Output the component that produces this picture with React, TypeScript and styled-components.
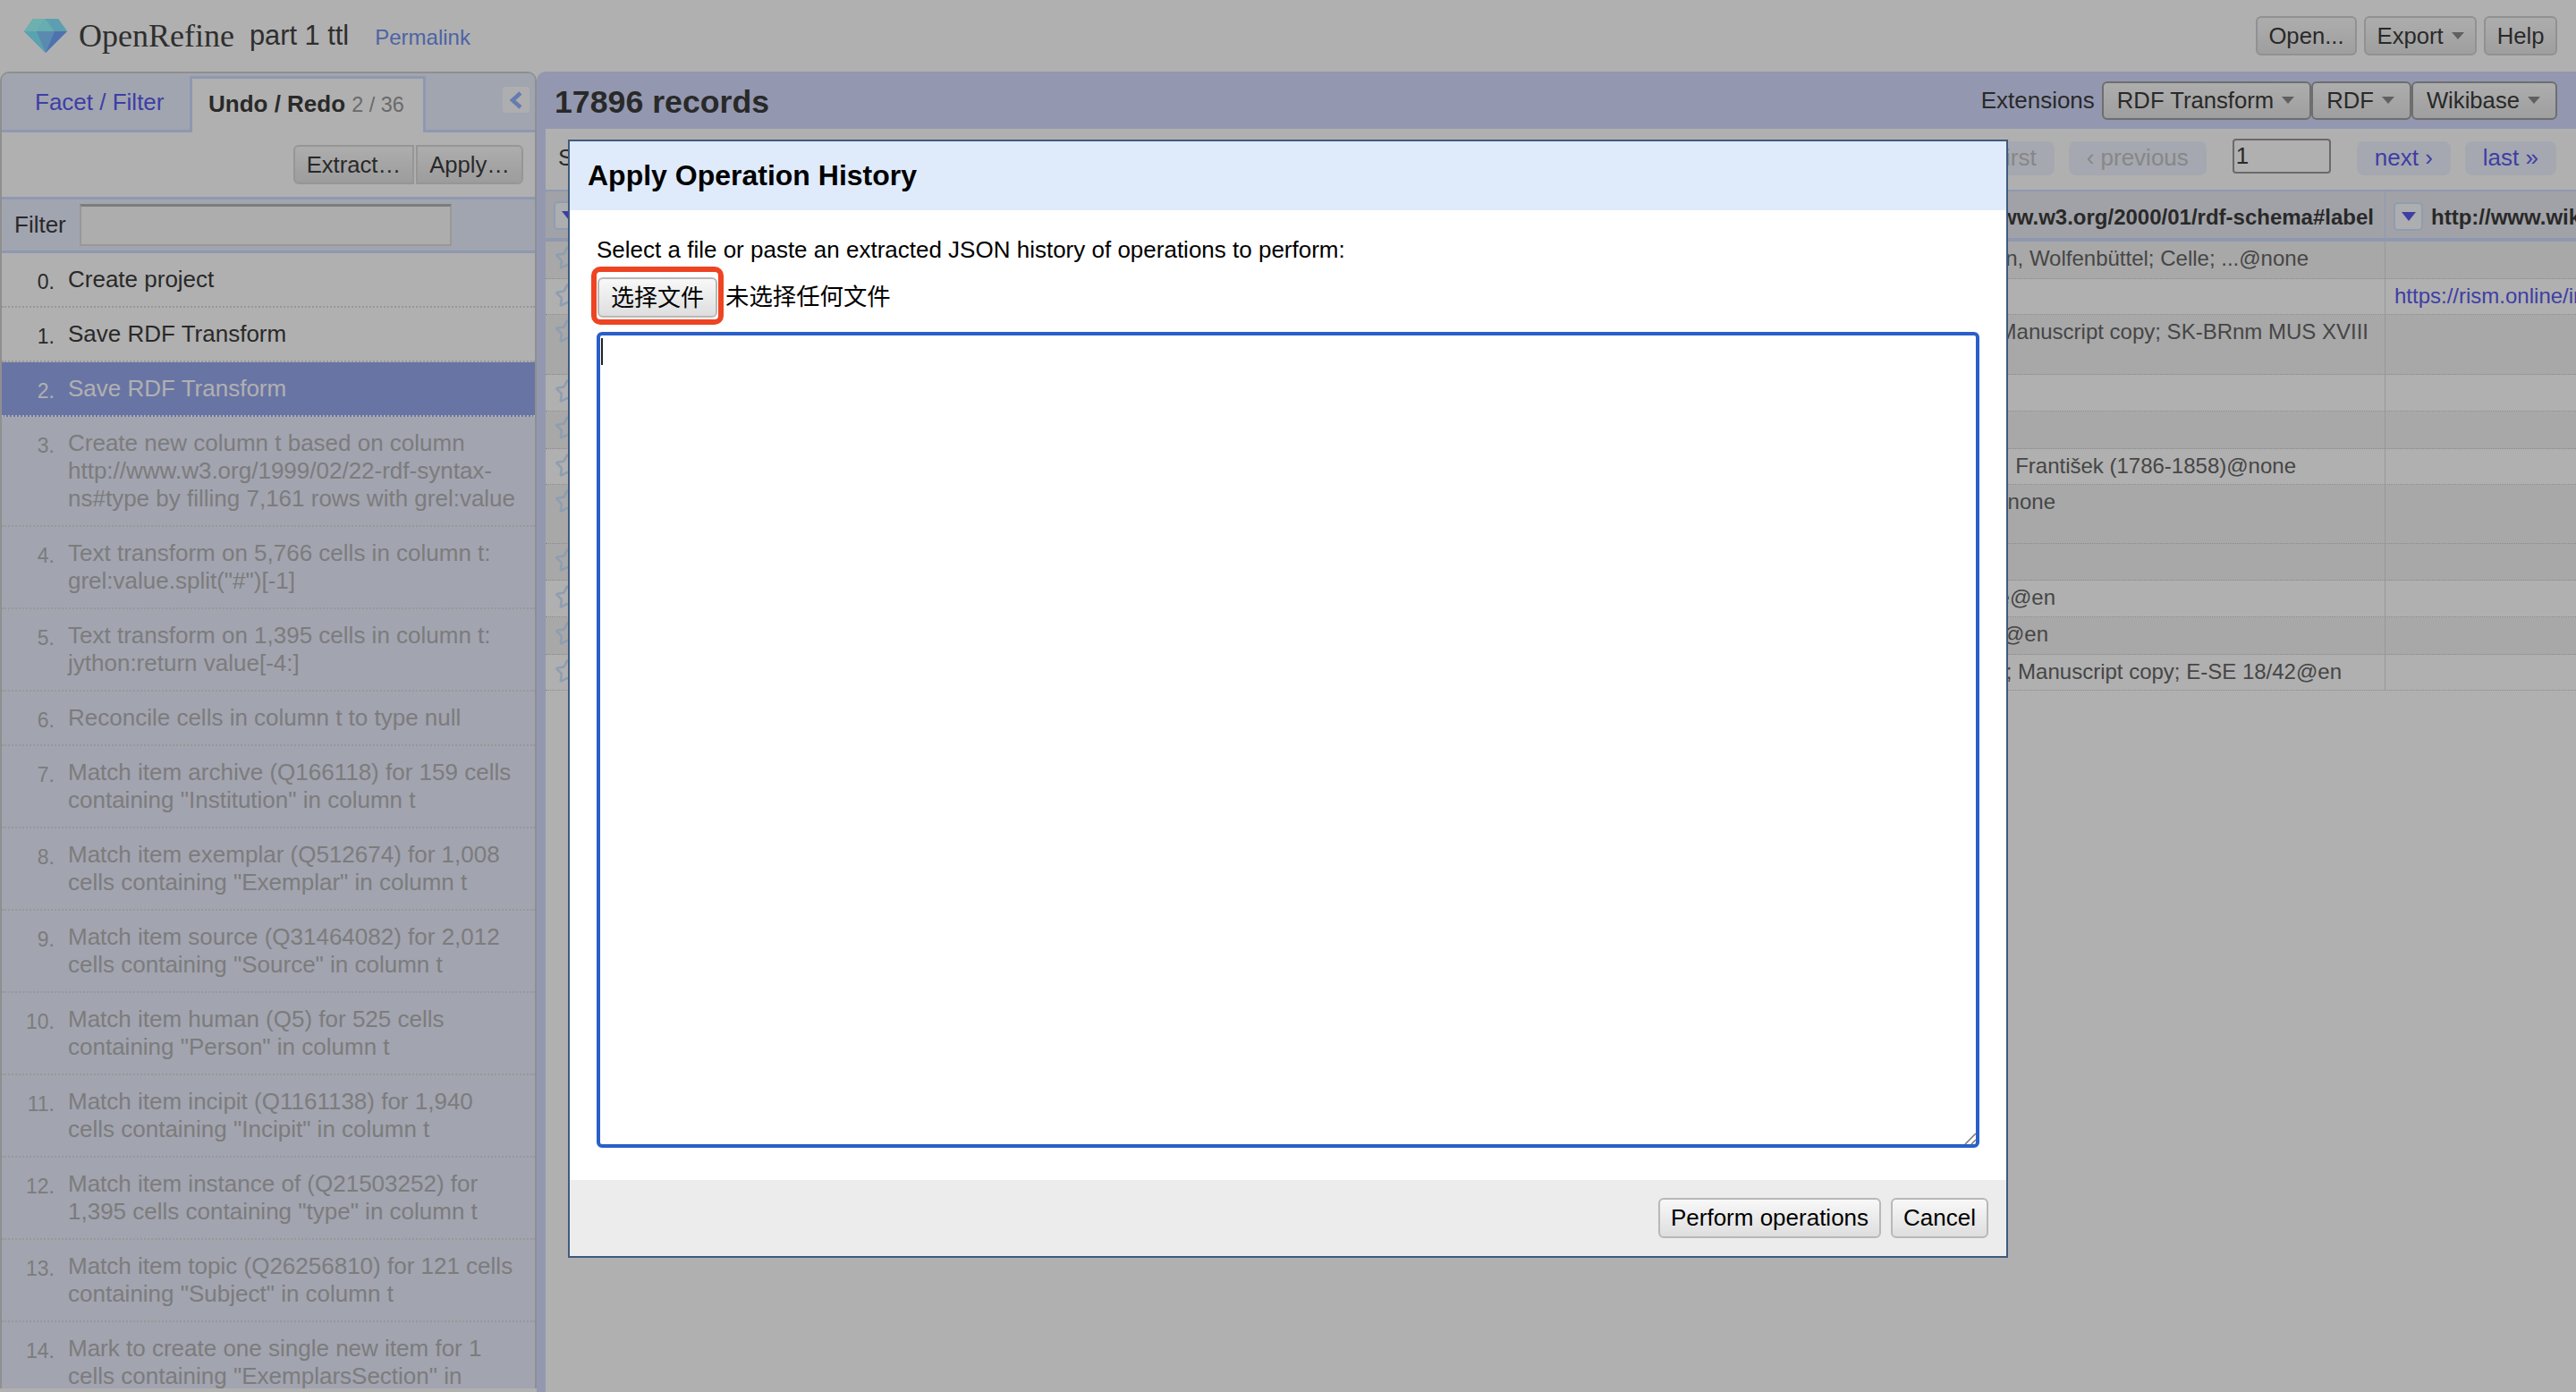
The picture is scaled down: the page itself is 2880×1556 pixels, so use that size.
import styled, { createGlobalStyle } from "styled-components";
import { Star } from "lucide-react";

const GlobalStyle = createGlobalStyle`
  html, body {
    margin: 0;
    height: 100%;
    overflow: hidden;
    background: #fff;
    font-family: "Liberation Sans", Arial, sans-serif;
    font-size: 26px;
    color: #3c3c3c;
  }
  * { box-sizing: border-box; }
`;

const history = [
  "Create project",
  "Save RDF Transform",
  "Save RDF Transform",
  "Create new column t based on column http://www.w3.org/1999/02/22-rdf-syntax-ns#type by filling 7,161 rows with grel:value",
  'Text transform on 5,766 cells in column t: grel:value.split("#")[-1]',
  "Text transform on 1,395 cells in column t: jython:return value[-4:]",
  "Reconcile cells in column t to type null",
  'Match item archive (Q166118) for 159 cells containing "Institution" in column t',
  'Match item exemplar (Q512674) for 1,008 cells containing "Exemplar" in column t',
  'Match item source (Q31464082) for 2,012 cells containing "Source" in column t',
  'Match item human (Q5) for 525 cells containing "Person" in column t',
  'Match item incipit (Q1161138) for 1,940 cells containing "Incipit" in column t',
  'Match item instance of (Q21503252) for 1,395 cells containing "type" in column t',
  'Match item topic (Q26256810) for 121 cells containing "Subject" in column t',
  'Mark to create one single new item for 1 cells containing "ExemplarsSection" in column t',
];

const CURRENT = 2;

const rows = [
  { h: 42, dark: true, end: 85, text: "Niedersachsen, Wolfenbüttel; Celle; ...@none" },
  { h: 40, dark: false, end: 0, text: "", link: "https://rism.online/incipits/1000" },
  { h: 67, dark: true, end: 18, text: "Manuscript copy; SK-BRnm MUS XVIII" },
  { h: 41, dark: false, end: 0, text: "" },
  { h: 42, dark: true, end: 0, text: "" },
  { h: 40, dark: false, end: 99, text: "František (1786-1858)@none" },
  { h: 66, dark: true, end: 368, text: "@none" },
  { h: 41, dark: true, end: 0, text: "" },
  { h: 41, dark: false, end: 368, text: "e@en" },
  { h: 42, dark: true, end: 376, text: "@en" },
  { h: 40, dark: false, end: 48, text: "; Manuscript copy; E-SE 18/42@en" },
];

function Logo() {
  return (
    <svg width="48" height="38" viewBox="0 0 48 38">
      <polygon points="10,0 38,0 48,14 24,38 0,14" fill="#84d5ff" />
      <polygon points="10,0 24,0 14,14 0,14" fill="#9effff" />
      <polygon points="24,0 14,14 34,14" fill="#94fcff" />
      <polygon points="24,0 38,0 48,14 34,14" fill="#87e6ff" />
      <polygon points="0,14 14,14 24,38" fill="#82ecff" />
      <polygon points="14,14 34,14 24,38" fill="#84c9ff" />
      <polygon points="34,14 48,14 24,38" fill="#72a5ff" />
    </svg>
  );
}

function Chevron() {
  return (
    <svg width="16" height="20" viewBox="0 0 16 20">
      <path d="M13 2 L4 10 L13 18" fill="none" stroke="#8aaeff" strokeWidth="4.5" />
    </svg>
  );
}

function ResizeGrip() {
  return (
    <svg width="14" height="14" viewBox="0 0 14 14">
      <path d="M1 13 L13 1 M8 13 L13 8" stroke="#777" strokeWidth="1.5" fill="none" />
    </svg>
  );
}

export default function App() {
  return (
    <Page>
      <GlobalStyle />
      <Header>
        <Logo />
        <Brand>OpenRefine</Brand>
        <ProjectName>part 1 ttl</ProjectName>
        <Permalink>Permalink</Permalink>
        <HeaderActions>
          <HeaderButton>Open...</HeaderButton>
          <HeaderButton>
            Export <Caret />
          </HeaderButton>
          <HeaderButton>Help</HeaderButton>
        </HeaderActions>
      </Header>

      <Body>
        <LeftPanel>
          <TabBar>
            <Tab>Facet / Filter</Tab>
            <ActiveTab>
              <strong>Undo / Redo</strong> <TabCount>2 / 36</TabCount>
            </ActiveTab>
            <CollapseButton>
              <Chevron />
            </CollapseButton>
          </TabBar>
          <ActionRow>
            <GroupButton $side="left">Extract…</GroupButton>
            <GroupButton $side="right">Apply…</GroupButton>
          </ActionRow>
          <FilterRow>
            <span>Filter</span>
            <FilterInput />
          </FilterRow>
          {history.map((text, i) => (
            <HistoryRow key={i} $state={i < CURRENT ? "done" : i === CURRENT ? "current" : "future"}>
              <HistoryIndex>{i}.</HistoryIndex>
              <div>{text}</div>
            </HistoryRow>
          ))}
        </LeftPanel>

        <RightPanel>
          <SummaryBar>
            <RecordCount>17896 records</RecordCount>
            <Extensions>
              <span>Extensions</span>
              <ExtensionButtons>
                <ExtensionButton>
                  RDF Transform <Caret />
                </ExtensionButton>
                <ExtensionButton>
                  RDF <Caret />
                </ExtensionButton>
                <ExtensionButton>
                  Wikibase <Caret />
                </ExtensionButton>
              </ExtensionButtons>
            </Extensions>
          </SummaryBar>

          <Content>
            <Pager>
              <span>Show as: rows records</span>
              <PagerControls>
                <PageLink $disabled>« first</PageLink>
                <PageLink $disabled>‹ previous</PageLink>
                <PageInput defaultValue="1" />
                <PageLink>next ›</PageLink>
                <PageLink>last »</PageLink>
              </PagerControls>
            </Pager>

            <TableHead>
              <HeadStarCell>
                <ColumnMenu>
                  <MenuArrow />
                </ColumnMenu>
              </HeadStarCell>
              <HeadLabel>http://www.w3.org/2000/01/rdf-schema#label</HeadLabel>
              <HeadLast>
                <ColumnMenu>
                  <MenuArrow />
                </ColumnMenu>
                <HeadLastText>http://www.wikidata.org/prop</HeadLastText>
              </HeadLast>
            </TableHead>

            {rows.map((row, i) => (
              <TableRow key={i} $dark={row.dark} $height={row.h}>
                <StarCell>
                  <Star size={29} strokeWidth={2.1} color="#cfe4ff" />
                </StarCell>
                <LabelCell $end={row.end}>{row.text}</LabelCell>
                <LastCell>{row.link && <CellLink>{row.link}</CellLink>}</LastCell>
              </TableRow>
            ))}
          </Content>
        </RightPanel>
      </Body>

      <Overlay />

      <Dialog>
        <DialogTitle>Apply Operation History</DialogTitle>
        <DialogBody>
          <div>Select a file or paste an extracted JSON history of operations to perform:</div>
          <FileRow>
            <Highlight>
              <FileButton>选择文件</FileButton>
            </Highlight>
            <FileLabel>未选择任何文件</FileLabel>
          </FileRow>
          <TextareaWrap>
            <HistoryInput />
            <TextCaret />
            <GripSlot>
              <ResizeGrip />
            </GripSlot>
          </TextareaWrap>
        </DialogBody>
        <DialogFooter>
          <DialogButton>Perform operations</DialogButton>
          <DialogButton>Cancel</DialogButton>
        </DialogFooter>
      </Dialog>
    </Page>
  );
}

const Page = styled.div`
  display: flex;
  flex-direction: column;
  width: 2880px;
  height: 1556px;
  overflow: hidden;
`;

const Header = styled.header`
  display: flex;
  align-items: center;
  flex: 0 0 80px;
  padding: 0 21px 0 27px;
`;

const Brand = styled.span`
  margin-left: 13px;
  font-family: "Liberation Serif", "Times New Roman", serif;
  font-size: 36px;
  color: #444;
`;

const ProjectName = styled.span`
  margin-left: 17px;
  font-size: 30.8px;
  color: #444;
`;

const Permalink = styled.a`
  margin-left: 29px;
  margin-top: 4px;
  font-size: 24px;
  color: #6f92ee;
`;

const HeaderActions = styled.div`
  display: flex;
  gap: 8px;
  margin-left: auto;
`;

const HeaderButton = styled.button`
  display: flex;
  align-items: center;
  gap: 9px;
  height: 44px;
  padding: 0 12.5px;
  font: inherit;
  font-size: 25.67px;
  color: #3c3c3c;
  background: linear-gradient(#fbfbfb, #e6e6e6);
  border: 2px solid #d2d2d2;
  border-radius: 6px;
`;

const Caret = styled.i`
  display: inline-block;
  border-left: 7px solid transparent;
  border-right: 7px solid transparent;
  border-top: 8px solid #8c8c8c;
`;

const Body = styled.div`
  display: flex;
  flex: 1;
  min-height: 0;
`;

const LeftPanel = styled.aside`
  flex: 0 0 600px;
  margin-bottom: 4px;
  overflow: hidden;
  border: 2px solid #cfcfcf;
  border-bottom: 0;
  border-radius: 10px 10px 0 0;
`;

const TabBar = styled.div`
  display: flex;
  height: 66px;
  background: #e9efff;
  border-bottom: 3px solid #cfdcff;
`;

const Tab = styled.div`
  width: 210px;
  padding: 17px 0 0 37px;
  color: #5b5bef;
`;

const ActiveTab = styled.div`
  width: 264px;
  margin: 3px 0 -3px;
  padding: 13px 0 0 18px;
  white-space: nowrap;
  background: #fff;
  border: 3px solid #cfdcff;
  border-bottom: 0;
`;

const TabCount = styled.span`
  font-size: 23.4px;
  color: #9a9a9a;
`;

const CollapseButton = styled.div`
  display: flex;
  align-items: center;
  justify-content: center;
  width: 30px;
  height: 29px;
  margin: 15px 6px 0 auto;
  background: #fff;
  border-radius: 4px;
  opacity: 0.9;
`;

const ActionRow = styled.div`
  display: flex;
  justify-content: flex-end;
  align-items: center;
  gap: 2px;
  height: 72px;
  padding-right: 13px;
`;

const GroupButton = styled.button<{ $side: "left" | "right" }>`
  height: 44px;
  padding: 0 13px;
  font: inherit;
  font-size: 25.67px;
  color: #3c3c3c;
  background: linear-gradient(#fbfbfb, #e3e3e3);
  border: 2px solid #dadada;
  border-radius: ${(p) => (p.$side === "left" ? "6px 0 0 6px" : "0 6px 6px 0")};
`;

const FilterRow = styled.div`
  display: flex;
  align-items: center;
  gap: 15px;
  height: 63px;
  padding-left: 14px;
  background: #e9efff;
  border-top: 3px solid #cfdcff;
  border-bottom: 3px solid #cfdcff;
`;

const FilterInput = styled.input`
  width: 416px;
  height: 47px;
  background: #fbfbfb;
  border: 2px solid #dcdcdc;
  border-top: 3px solid #b4b4b4;
`;

const HistoryRow = styled.div<{ $state: "done" | "current" | "future" }>`
  display: grid;
  grid-template-columns: 59px 1fr;
  column-gap: 15px;
  padding: 14px 13px 14px 0;
  line-height: 31px;
  border-bottom: 2px dotted ${(p) => (p.$state === "current" ? "#fff" : "#dcdcdc")};
  background: ${(p) => (p.$state === "current" ? "#97a8ee" : p.$state === "future" ? "#ebeeff" : "#fff")};
  color: ${(p) => (p.$state === "current" ? "#fff" : p.$state === "future" ? "#b4b4b4" : "#3c3c3c")};
`;

const HistoryIndex = styled.div`
  padding-top: 5px;
  font-size: 23px;
  line-height: 26px;
  text-align: right;
`;

const RightPanel = styled.main`
  display: flex;
  flex-direction: column;
  flex: 1;
  min-width: 0;
  padding-left: 10px;
  background: #d6dcff;
  border-radius: 10px 0 0 0;
`;

const SummaryBar = styled.div`
  display: flex;
  align-items: center;
  justify-content: space-between;
  flex: 0 0 64px;
  margin-left: -10px;
  padding: 0 21px 0 20px;
`;

const RecordCount = styled.h2`
  margin: 6px 0 0;
  font-size: 35.7px;
  line-height: 1;
`;

const Extensions = styled.div`
  display: flex;
  align-items: center;
  gap: 8px;
`;

const ExtensionButtons = styled.div`
  display: flex;
`;

const ExtensionButton = styled.button`
  display: flex;
  align-items: center;
  gap: 9px;
  height: 43px;
  padding: 0 17px 0 15px;
  font: inherit;
  font-size: 25.67px;
  color: #3c3c3c;
  background: linear-gradient(#fbfbfb, #e6e6e6);
  border: 2px solid #a0a0a0;
  border-radius: 6px;
`;

const Content = styled.div`
  flex: 1;
  min-height: 0;
  overflow: hidden;
  background: #fff;
`;

const Pager = styled.div`
  display: flex;
  align-items: center;
  justify-content: space-between;
  height: 68px;
  padding: 0 22px 3px 14px;
`;

const PagerControls = styled.div`
  display: flex;
  align-items: center;
  gap: 16px;
`;

const PageLink = styled.a<{ $disabled?: boolean }>`
  display: flex;
  align-items: center;
  height: 38px;
  padding: 0 20px;
  background: #f0f3ff;
  border-radius: 8px;
  color: ${(p) => (p.$disabled ? "#c4c4c4" : "#5b5bef")};
`;

const PageInput = styled.input`
  width: 110px;
  height: 39px;
  margin: -5px 13px 0;
  padding: 0 2px;
  font: inherit;
  color: #3c3c3c;
  background: #fff;
  border: 2px solid #9a9a9a;
  border-radius: 4px;
`;

const TableHead = styled.div`
  display: flex;
  height: 58px;
  font-size: 24px;
  font-weight: 700;
  background: #eaebf2;
  border-top: 2px solid #cfdcff;
  border-bottom: 4px solid #cfdcff;
`;

const HeadStarCell = styled.div`
  flex: 0 0 40px;
  padding: 11px 0 0 9px;
`;

const HeadLabel = styled.div`
  flex: 1;
  display: flex;
  align-items: center;
  justify-content: flex-end;
  padding: 6px 12px 0 0;
  white-space: nowrap;
  overflow: hidden;
  border-right: 1px solid #cfdcff;
`;

const HeadLast = styled.div`
  display: flex;
  align-items: center;
  gap: 9px;
  flex: 0 0 213px;
  padding: 3px 0 0 9px;
  white-space: nowrap;
  overflow: hidden;
`;

const HeadLastText = styled.span`
  padding-top: 2px;
`;

const ColumnMenu = styled.div`
  display: flex;
  flex: 0 0 33px;
  align-items: center;
  justify-content: center;
  width: 33px;
  height: 32px;
  background: #fbfcff;
  border: 2.5px solid #cfe4ff;
  border-radius: 5px;
`;

const MenuArrow = styled.i`
  border-left: 8px solid transparent;
  border-right: 8px solid transparent;
  border-top: 10px solid #5b5bef;
`;

const TableRow = styled.div<{ $dark: boolean; $height: number }>`
  display: flex;
  height: ${(p) => p.$height}px;
  line-height: 38px;
  font-size: 24px;
  color: #666;
  background: ${(p) => (p.$dark ? "#f3f3f3" : "#fff")};
  border-bottom: 1px dotted #c8c8c8;
`;

const StarCell = styled.div`
  flex: 0 0 40px;
  padding: 4px 0 0 10px;
`;

const LabelCell = styled.div<{ $end: number }>`
  flex: 1;
  padding-right: ${(p) => p.$end}px;
  text-align: right;
  white-space: nowrap;
  overflow: hidden;
  border-right: 1px solid #dcdcdc;
`;

const LastCell = styled.div`
  flex: 0 0 213px;
  padding-left: 10px;
  white-space: nowrap;
  overflow: hidden;
`;

const CellLink = styled.a`
  color: #5b5bef;
`;

const Overlay = styled.div`
  position: fixed;
  inset: 0;
  background: rgba(0, 0, 0, 0.31);
`;

const Dialog = styled.section`
  position: fixed;
  left: 635px;
  top: 156px;
  display: flex;
  flex-direction: column;
  width: 1610px;
  height: 1250px;
  color: #000;
  background: #fff;
  border: 2px solid #3f5a7e;
`;

const DialogTitle = styled.h1`
  display: flex;
  align-items: center;
  flex: 0 0 77px;
  margin: 0;
  padding-left: 20px;
  font-size: 32px;
  background: #dfebfb;
`;

const DialogBody = styled.div`
  flex: 1;
  padding: 29px 30px 0;
  line-height: 31px;
`;

const FileRow = styled.div`
  display: flex;
  align-items: center;
  gap: 2px;
  margin: 3px 0 8px -6px;
`;

const Highlight = styled.div`
  padding: 6px 1px 2px;
  border: 6px solid #ee4423;
  border-radius: 10px;
`;

const DialogButton = styled.button`
  height: 45px;
  padding: 0 12px;
  font-family: "Liberation Sans", sans-serif;
  font-size: 26px;
  color: #000;
  background: linear-gradient(#f8f8f8, #dedede);
  border: 2px solid #b8b8b8;
  border-radius: 6px;
`;

const FileButton = styled(DialogButton)`
  display: block;
  width: 134px;
  padding: 0 0 4px;
  font-family: "Noto Sans CJK SC", sans-serif;
  line-height: 1;
`;

const FileLabel = styled.span`
  margin-top: -3px;
  font-family: "Noto Sans CJK SC", sans-serif;
  font-size: 26.4px;
`;

const TextareaWrap = styled.div`
  position: relative;
  width: 1546px;
  height: 912px;
`;

const HistoryInput = styled.textarea`
  display: block;
  width: 100%;
  height: 100%;
  padding: 3px;
  background: #fff;
  border: 4px solid #2a5fca;
  border-radius: 6px;
  outline: none;
  resize: none;
`;

const TextCaret = styled.i`
  position: absolute;
  left: 5px;
  top: 7px;
  width: 2px;
  height: 30px;
  background: #222;
`;

const GripSlot = styled.div`
  position: absolute;
  right: 3px;
  bottom: 3px;
  line-height: 0;
`;

const DialogFooter = styled.div`
  display: flex;
  justify-content: flex-end;
  align-items: center;
  gap: 11px;
  flex: 0 0 85px;
  padding-right: 20px;
  background: #ececec;
`;
